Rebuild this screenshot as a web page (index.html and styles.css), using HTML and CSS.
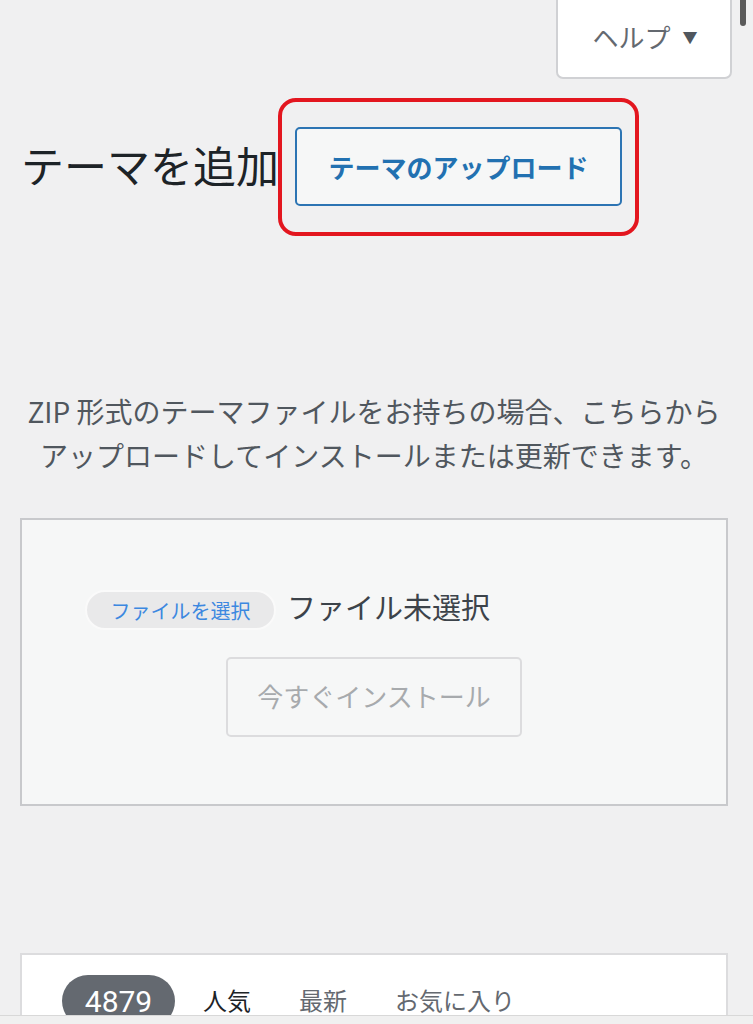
FILE: index.html
```html
<!DOCTYPE html>
<html lang="ja">
<head>
<meta charset="utf-8">
<title>テーマを追加</title>
<link rel="stylesheet" href="styles.css">
</head>
<body>
<div class="page">
  <div class="help-row">
    <button class="help-tab">ヘルプ <span class="tri">▼</span></button>
  </div>
  <div class="title-row">
    <h1 class="title">テーマを追加</h1>
    <div class="highlight">
      <button class="upload-toggle">テーマのアップロード</button>
    </div>
  </div>
  <p class="desc">ZIP 形式のテーマファイルをお持ちの場合、こちらから<br>アップロードしてインストールまたは更新できます。</p>
  <div class="upload-box">
    <div class="file-row">
      <span class="file-btn">ファイルを選択</span>
      <span class="file-none">ファイル未選択</span>
    </div>
    <div class="install-row">
      <button class="install-btn">今すぐインストール</button>
    </div>
  </div>
  <div class="themes-box">
    <div class="filter-row">
      <span class="count">4879</span>
      <span class="tab current">人気</span>
      <span class="tab">最新</span>
      <span class="tab">お気に入り</span>
    </div>
  </div>
</div>
<div class="scrollbar"></div>
<div class="bottom-bar"></div>
</body>
</html>
```

FILE: styles.css
```css
html, body {
  margin: 0;
  padding: 0;
  height: 1024px;
  overflow: hidden;
  background: #f0f0f1;
  font-family: "Noto Sans CJK JP", "Noto Sans", sans-serif;
}

.page {
  padding: 0 25px 0 20px;
}

.help-row {
  display: flex;
  justify-content: flex-end;
  margin-right: -4px;
}

.help-tab {
  margin-top: -12px;
  width: 176px;
  height: 91px;
  padding: 6px 0 0 2px;
  background: #fff;
  border: 2px solid #d0d1d4;
  border-radius: 0 0 7px 7px;
  font-family: inherit;
  font-size: 26px;
  color: #646970;
  display: flex;
  align-items: center;
  justify-content: center;
  gap: 4px;
}

.tri {
  font-size: 15px;
  color: #50575e;
  margin-left: 8px;
}

.title-row {
  display: flex;
  align-items: center;
  margin-top: 19px;
}

.title {
  margin: -4px 0 0 1px;
  font-size: 43px;
  font-weight: 400;
  color: #1d2327;
  line-height: 1.2;
}

.highlight {
  margin-left: -1px;
  border: 4px solid #e3161f;
  border-radius: 18px;
  padding: 25px 13px 26px;
}

.upload-toggle {
  display: block;
  width: 327px;
  height: 79px;
  background: #f6f7f7;
  border: 2px solid #2c74b3;
  border-radius: 5px;
  font-family: inherit;
  font-size: 26px;
  font-weight: 700;
  color: #2271b1;
  padding: 0;
}

.desc {
  margin: 153px 0 0;
  text-align: center;
  font-size: 28px;
  line-height: 44px;
  color: #50575e;
}

.upload-box {
  margin-top: 41px;
  background: #f6f7f7;
  border: 2px solid #c8c9cc;
  padding: 70px 0 67px;
}

.file-row {
  display: flex;
  align-items: center;
  height: 40px;
  padding-left: 63px;
  gap: 11px;
}

.file-btn {
  box-sizing: border-box;
  height: 40px;
  width: 191px;
  border-radius: 20px;
  background: #e9e9ea;
  border: 2px solid #fafafa;
  display: flex;
  align-items: center;
  justify-content: center;
  font-size: 20px;
  color: #3c88e0;
}

.file-none {
  font-size: 29px;
  color: #3c434a;
  margin-top: -8px;
}

.install-row {
  display: flex;
  justify-content: center;
  margin-top: 27px;
}

.install-btn {
  width: 296px;
  height: 80px;
  background: #f6f7f7;
  border: 2px solid #dcdcde;
  border-radius: 5px;
  font-family: inherit;
  font-size: 26px;
  color: #a7aaad;
  padding: 0 0 4px;
}

.themes-box {
  margin-top: 147px;
  background: #fff;
  border: 2px solid #dcdcde;
  padding: 20px 0 0 40px;
  height: 200px;
}

.filter-row {
  display: flex;
  align-items: center;
}

.count {
  display: flex;
  align-items: center;
  justify-content: center;
  width: 113px;
  height: 52px;
  border-radius: 26px;
  background: #646970;
  color: #fff;
  font-family: "Roboto", "Noto Sans", sans-serif;
  font-size: 30px;
}

.tab {
  font-size: 24px;
  color: #646970;
  margin-left: 48px;
  margin-top: -4px;
}

.tab.current {
  color: #1d2327;
  margin-left: 28px;
}

.scrollbar {
  position: fixed;
  top: -4px;
  left: 740px;
  width: 6px;
  height: 30px;
  border-radius: 3px;
  background: #5a5a5a;
}

.bottom-bar {
  position: fixed;
  left: 0;
  right: 0;
  bottom: 0;
  height: 8px;
  background: #f0f0f0;
  border-top: 1px solid #d8d8d8;
}
```
